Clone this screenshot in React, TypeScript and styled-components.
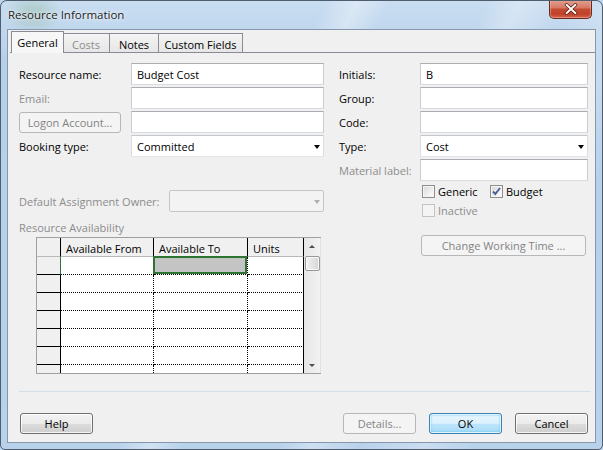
import React from "react";
import styled, { createGlobalStyle } from "styled-components";

const Global = createGlobalStyle`
  html, body { margin: 0; padding: 0; background: #bcd4ec; }
  body { font-family: "Open Sans", "Noto Sans", sans-serif; font-size: 11px; color: #000; }
  * { box-sizing: border-box; }
`;

const Window = styled.div`
  width: 603px;
  height: 450px;
  border: 1px solid #4f5d6d;
  border-radius: 7px 7px 5px 5px;
  padding: 0 6px 6px 6px;
  display: flex;
  flex-direction: column;
  overflow: hidden;
  background:
    radial-gradient(ellipse 30px 22px at 32px 12px, rgba(120, 170, 120, 0.35), rgba(120,170,120,0) 100%),
    linear-gradient(115deg, rgba(255,255,255,0) 0%, rgba(255,255,255,0) 40%, rgba(255,255,255,0.35) 44%, rgba(255,255,255,0) 48%, rgba(255,255,255,0) 60%, rgba(255,255,255,0.3) 64%, rgba(255,255,255,0) 70%, rgba(255,255,255,0.25) 78%, rgba(255,255,255,0) 84%),
    linear-gradient(#c9ddf1, #b7d0ea 60px, #b9d2ec);
`;

const TitleBar = styled.div`
  height: 28px;
  display: flex;
  justify-content: space-between;
  align-items: flex-start;
`;

const Title = styled.div`
  margin: 6px 0 0 1px;
  font-size: 11.5px;
  color: #1a1a1a;
  text-shadow: 0 0 6px rgba(255, 255, 255, 0.9), 0 0 2px rgba(255,255,255,0.9);
`;

const CloseButton = styled.div`
  width: 43px;
  height: 19px;
  margin: -1px 4px 0 0;
  border: 1px solid #6b2a1f;
  border-top: none;
  border-radius: 0 0 5px 5px;
  background: linear-gradient(#e2a293 0%, #d77a66 42%, #c44b31 52%, #c0412a 78%, #d6674c 100%);
  box-shadow: inset 0 0 0 1px rgba(255, 200, 190, 0.4);
  display: flex;
  align-items: center;
  justify-content: center;
`;

const Client = styled.div`
  flex: 1;
  border: 1px solid #8497ad;
  background: #f0f0f0;
  display: flex;
  flex-direction: column;
`;

const TabStrip = styled.div`
  display: flex;
  align-items: flex-end;
  height: 22px;
  padding-left: 3px;
  margin-top: 1px;
  position: relative;
  z-index: 1;
`;

const Tab = styled.div<{ $active?: boolean; $disabled?: boolean; $w: number }>`
  width: ${(p) => p.$w}px;
  height: ${(p) => (p.$active ? "22px" : "20px")};
  margin-right: ${(p) => (p.$active ? "-1px" : "0")};
  margin-left: ${(p) => (p.$active ? "0" : "-1px")};
  display: flex;
  align-items: center;
  justify-content: center;
  padding-top: ${(p) => (p.$active ? "0" : "2px")};
  padding-bottom: ${(p) => (p.$active ? "1px" : "0")};
  border: 1px solid #898c95;
  border-bottom: ${(p) => (p.$active ? "none" : "1px solid #898c95")};
  background: ${(p) => (p.$active ? "#f7f7f7" : "linear-gradient(#f4f4f4, #e6e6e6)")};
  color: ${(p) => (p.$disabled ? "#8c8c8c" : "#000")};
  white-space: nowrap;
  position: relative;
  z-index: ${(p) => (p.$active ? 2 : 1)};
  &:first-child { margin-left: 0; }
`;

const TabPane = styled.div`
  margin: -1px 0 0 2px;
  border-top: 1px solid #898c95;
  padding: 10px 0 0 9px;
  display: flex;
  gap: 15px;
  height: 330px;
`;

const Column = styled.div<{ $w: number }>`
  width: ${(p) => p.$w}px;
  display: flex;
  flex-direction: column;
`;

const FieldRow = styled.div<{ $label: number; $mt?: number }>`
  display: grid;
  grid-template-columns: ${(p) => p.$label}px 1fr;
  align-items: center;
  height: 22px;
  margin-bottom: 2px;
  margin-top: ${(p) => p.$mt ?? 0}px;
`;

const Label = styled.span<{ $disabled?: boolean }>`
  color: ${(p) => (p.$disabled ? "#8c8c8c" : "#000")};
  white-space: nowrap;
`;

const TextBox = styled.div`
  height: 22px;
  background: #fff;
  border: 1px solid;
  border-color: #abadb3 #c9ccd2 #d8dbe0 #c9ccd2;
  padding-left: 5px;
  display: flex;
  align-items: center;
  white-space: nowrap;
`;

const Combo = styled(TextBox)<{ $disabled?: boolean }>`
  justify-content: space-between;
  padding-right: 3px;
  background: ${(p) => (p.$disabled ? "#f3f3f3" : "#fff")};
  border-color: ${(p) => (p.$disabled ? "#c5c5c5" : "#c4c7cc #dadde2 #e2e5e9 #dadde2")};
  border-radius: ${(p) => (p.$disabled ? "2px" : "0")};
`;

const Arrow = styled.span<{ $disabled?: boolean }>`
  width: 0;
  height: 0;
  border-left: 3.5px solid transparent;
  border-right: 3.5px solid transparent;
  border-top: 4px solid ${(p) => (p.$disabled ? "#b0b0b0" : "#000")};
  margin-top: 1px;
`;

const Button = styled.div<{ $disabled?: boolean; $default?: boolean; $w: number; $h?: number }>`
  width: ${(p) => p.$w}px;
  height: ${(p) => p.$h ?? 21}px;
  border: 1px solid ${(p) => (p.$disabled ? "#b4b8bb" : p.$default ? "#3c7fb1" : "#707070")};
  border-radius: 3px;
  display: flex;
  align-items: center;
  justify-content: center;
  color: ${(p) => (p.$disabled ? "#838383" : "#000")};
  white-space: nowrap;
  background: ${(p) =>
    p.$disabled
      ? "#f4f4f4"
      : p.$default
      ? "linear-gradient(#eaf6fd 0%, #d9f0fc 50%, #bee6fd 51%, #a7d9f5 100%)"
      : "linear-gradient(#f2f2f2 0%, #ebebeb 50%, #dddddd 51%, #cfcfcf 100%)"};
  box-shadow: ${(p) =>
    p.$disabled
      ? "none"
      : p.$default
      ? "inset 0 0 0 1px rgba(255,255,255,0.8), inset 0 0 2px 1px #48c4f5"
      : "inset 0 0 0 1px rgba(255,255,255,0.75)"};
`;

const CheckRow = styled.div<{ $mt: number }>`
  display: flex;
  align-items: center;
  height: 14px;
  margin: ${(p) => p.$mt}px 0 0 83px;
`;

const CheckItem = styled.div<{ $w?: number }>`
  display: flex;
  align-items: center;
  gap: 3px;
  width: ${(p) => (p.$w ? `${p.$w}px` : "auto")};
`;

const Box = styled.span<{ $disabled?: boolean }>`
  width: 13px;
  height: 13px;
  border: 1px solid ${(p) => (p.$disabled ? "#c3c3c3" : "#8f8f8f")};
  background: ${(p) =>
    p.$disabled ? "#f4f4f4" : "linear-gradient(135deg, #d6d6d6 0%, #f0f0f0 60%, #ffffff 100%)"};
  box-shadow: inset 0 0 0 1px #f4f4f4;
  display: flex;
  align-items: center;
  justify-content: center;
`;

const SectionLabel = styled.div`
  color: #8c8c8c;
  margin-top: 6px;
  height: 15px;
  line-height: 15px;
`;

const GridWrap = styled.div`
  margin: 2px 0 0 17px;
  width: 285px;
  height: 137px;
  border: 1px solid #a0a0a0;
  border-right: none;
  display: flex;
  overflow: hidden;
`;

const Table = styled.div`
  display: grid;
  grid-template-columns: 24px 93px 94px 56px;
  grid-auto-rows: 18px;
  grid-template-rows: 19px;
  align-content: start;
`;

const HeadCell = styled.div`
  background: #f0f0f0;
  border-right: 1px solid #000;
  border-bottom: 1px solid #b8b8b8;
  padding: 3px 0 0 5px;
  color: #000;
  white-space: nowrap;
`;

const RowHead = styled.div<{ $current?: boolean }>`
  background: #f0f0f0;
  border-right: 1px solid ${(p) => (p.$current ? "#2e7431" : "#000")};
  border-bottom: 1px solid #000;
`;

const Cell = styled.div<{ $last?: boolean; $selected?: boolean }>`
  background: #fff;
  border-right: 1px ${(p) => (p.$last ? "solid" : "dotted")} #000;
  border-bottom: 1px dotted #000;
  position: relative;
  ${(p) =>
    p.$selected
      ? `&::after { content: ""; position: absolute; left: -1px; top: -1px; right: 0; bottom: 0;
          border: 2px solid #2e7431; background: #c4c4c4; }`
      : ""}
`;

const ScrollBar = styled.div`
  width: 17px;
  background: linear-gradient(to right, #e6e6e6, #f2f2f2);
  border-right: 1px solid #e2e2e2;
  display: flex;
  flex-direction: column;
  align-items: center;
`;

const ScrollArrow = styled.span<{ $down?: boolean }>`
  width: 0;
  height: 0;
  border-left: 3px solid transparent;
  border-right: 3px solid transparent;
  ${(p) => (p.$down ? "border-top: 3px solid #4d4d4d;" : "border-bottom: 3px solid #4d4d4d;")}
  margin-top: ${(p) => (p.$down ? "auto" : "7px")};
  margin-bottom: ${(p) => (p.$down ? "6px" : "0")};
`;

const Thumb = styled.div`
  width: 15px;
  height: 15px;
  margin-top: 8px;
  border: 1px solid #979797;
  border-radius: 2px;
  background: linear-gradient(to right, #f3f3f3, #e4e4e4 50%, #d5d5d5);
  box-shadow: inset 0 0 0 1px rgba(255,255,255,0.8);
`;

const Separator = styled.div`
  margin: 9px 4px 0 11px;
  height: 1px;
  background: #d5dde5;
`;

const Footer = styled.div`
  display: flex;
  align-items: center;
  padding: 21px 7px 0 12px;
  gap: 13px;
`;

const Spacer = styled.div`
  flex: 1;
`;

const CheckMark = () => (
  <svg width="11" height="11" viewBox="0 0 11 11">
    <path d="M2 5.5 L4.3 8 L9 2" fill="none" stroke="#4a5f9a" strokeWidth="1.9" />
  </svg>
);

const CloseX = () => (
  <svg width="14" height="12" viewBox="0 0 14 12">
    <path d="M2.5 1.8 L11.5 10.2 M11.5 1.8 L2.5 10.2" stroke="#5a1a10" strokeWidth="3.4" strokeLinecap="round" />
    <path d="M2.5 1.8 L11.5 10.2 M11.5 1.8 L2.5 10.2" stroke="#ffffff" strokeWidth="1.9" strokeLinecap="round" />
  </svg>
);

const rows = [0, 1, 2, 3, 4, 5, 6];

export default function App() {
  return (
    <>
      <Global />
      <Window>
        <TitleBar>
          <Title>Resource Information</Title>
          <CloseButton>
            <CloseX />
          </CloseButton>
        </TitleBar>
        <Client>
          <TabStrip>
            <Tab $active $w={53}>General</Tab>
            <Tab $disabled $w={48}>Costs</Tab>
            <Tab $w={50}>Notes</Tab>
            <Tab $w={85}>Custom Fields</Tab>
          </TabStrip>
          <TabPane>
            <Column $w={305}>
              <FieldRow $label={112}>
                <Label>Resource name:</Label>
                <TextBox>Budget Cost</TextBox>
              </FieldRow>
              <FieldRow $label={112}>
                <Label $disabled>Email:</Label>
                <TextBox />
              </FieldRow>
              <FieldRow $label={112}>
                <Button $disabled $w={102} $h={21}>
                  Logon Account...
                </Button>
                <TextBox />
              </FieldRow>
              <FieldRow $label={112}>
                <Label>Booking type:</Label>
                <Combo>
                  Committed
                  <Arrow />
                </Combo>
              </FieldRow>
              <FieldRow $label={150} $mt={31}>
                <Label $disabled>Default Assignment Owner:</Label>
                <Combo $disabled>
                  <span />
                  <Arrow $disabled />
                </Combo>
              </FieldRow>
              <SectionLabel>Resource Availability</SectionLabel>
              <GridWrap>
                <Table>
                  <HeadCell />
                  <HeadCell>Available From</HeadCell>
                  <HeadCell>Available To</HeadCell>
                  <HeadCell>Units</HeadCell>
                  {rows.map((r) => (
                    <React.Fragment key={r}>
                      <RowHead $current={r === 0} />
                      <Cell />
                      <Cell $selected={r === 0} />
                      <Cell $last />
                    </React.Fragment>
                  ))}
                </Table>
                <ScrollBar>
                  <ScrollArrow />
                  <Thumb />
                  <ScrollArrow $down />
                </ScrollBar>
              </GridWrap>
            </Column>
            <Column $w={249}>
              <FieldRow $label={81}>
                <Label>Initials:</Label>
                <TextBox>B</TextBox>
              </FieldRow>
              <FieldRow $label={81}>
                <Label>Group:</Label>
                <TextBox />
              </FieldRow>
              <FieldRow $label={81}>
                <Label>Code:</Label>
                <TextBox />
              </FieldRow>
              <FieldRow $label={81}>
                <Label>Type:</Label>
                <Combo>
                  Cost
                  <Arrow />
                </Combo>
              </FieldRow>
              <FieldRow $label={81}>
                <Label $disabled>Material label:</Label>
                <TextBox />
              </FieldRow>
              <CheckRow $mt={1}>
                <CheckItem $w={68}>
                  <Box />
                  <Label>Generic</Label>
                </CheckItem>
                <CheckItem>
                  <Box>
                    <CheckMark />
                  </Box>
                  <Label>Budget</Label>
                </CheckItem>
              </CheckRow>
              <CheckRow $mt={5}>
                <CheckItem>
                  <Box $disabled />
                  <Label $disabled>Inactive</Label>
                </CheckItem>
              </CheckRow>
              <CheckRow $mt={21}>
                <Button $disabled $w={165} $h={21} style={{ marginLeft: -1 }}>
                  Change Working Time ...
                </Button>
              </CheckRow>
            </Column>
          </TabPane>
          <Separator />
          <Footer>
            <Button $w={73}>Help</Button>
            <Spacer />
            <Button $disabled $w={73}>
              Details...
            </Button>
            <Button $default $w={73}>
              OK
            </Button>
            <Button $w={73}>Cancel</Button>
          </Footer>
        </Client>
      </Window>
    </>
  );
}
